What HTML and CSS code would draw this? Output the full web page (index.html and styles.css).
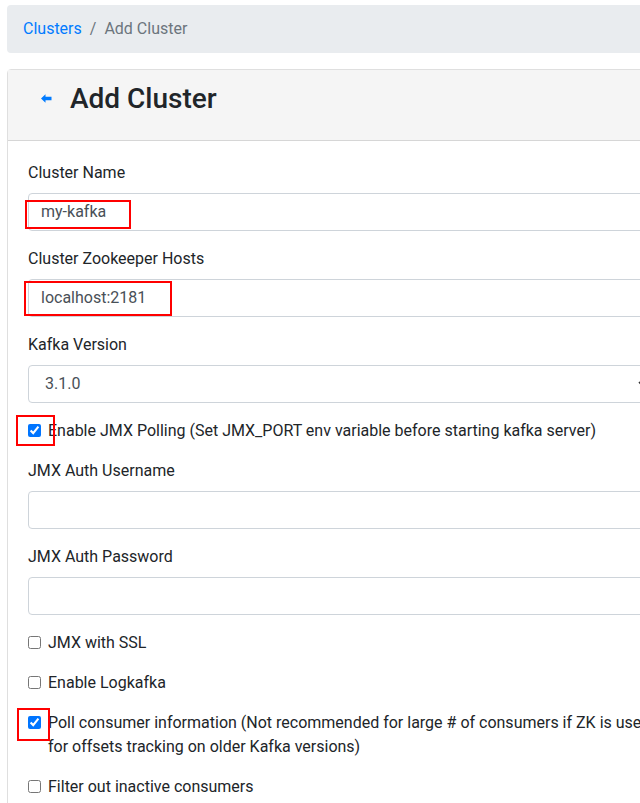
FILE: index.html
```html
<!DOCTYPE html>
<html lang="en">
<head>
<meta charset="utf-8">
<title>Add Cluster</title>
<link rel="stylesheet" href="styles.css">
</head>
<body>
<div class="page">
  <nav class="breadcrumb">
    <a class="crumb-link" href="#">Clusters</a>
    <span class="crumb-sep">/</span>
    <span class="crumb-active">Add Cluster</span>
  </nav>

  <div class="card">
    <div class="card-header">
      <a class="back" href="#">
        <svg width="11" height="9" viewBox="0 0 11 9"><path d="M0 4.5 L4.5 0.3 L4.5 2.8 L10.5 2.8 L10.5 6.2 L4.5 6.2 L4.5 8.7 Z" fill="#007bff"/></svg>
      </a>
      <h3 class="title">Add Cluster</h3>
    </div>
    <div class="card-body">
      <div class="form-group">
        <label class="label">Cluster Name</label>
        <input class="form-control" type="text" value="my-kafka">
      </div>
      <div class="form-group">
        <label class="label">Cluster Zookeeper Hosts</label>
        <input class="form-control" type="text" value="localhost:2181">
      </div>
      <div class="form-group">
        <label class="label">Kafka Version</label>
        <div class="select-wrap">
          <select class="form-control select"><option>3.1.0</option></select>
          <svg class="chevron" width="9" height="6" viewBox="0 0 9 6"><path d="M1 1 L4.5 4.5 L8 1" fill="none" stroke="#333" stroke-width="1.6"/></svg>
        </div>
      </div>
      <div class="form-check">
        <input class="check" type="checkbox" checked>
        <span>Enable JMX Polling (Set JMX_PORT env variable before starting kafka server)</span>
      </div>
      <div class="form-group">
        <label class="label">JMX Auth Username</label>
        <input class="form-control" type="text" value="">
      </div>
      <div class="form-group">
        <label class="label">JMX Auth Password</label>
        <input class="form-control" type="password" value="">
      </div>
      <div class="form-check">
        <input class="check" type="checkbox">
        <span>JMX with SSL</span>
      </div>
      <div class="form-check">
        <input class="check" type="checkbox">
        <span>Enable Logkafka</span>
      </div>
      <div class="form-check">
        <input class="check" type="checkbox" checked>
        <span>Poll consumer information (Not recommended for large # of consumers if ZK is used for offsets tracking on older Kafka versions)</span>
      </div>
      <div class="form-check">
        <input class="check" type="checkbox">
        <span>Filter out inactive consumers</span>
      </div>
    </div>
  </div>

  <div class="mark mark-1"></div>
  <div class="mark mark-2"></div>
  <div class="mark mark-3"></div>
  <div class="mark mark-4"></div>
</div>
</body>
</html>
```

FILE: styles.css
```css
html, body {
  margin: 0;
  padding: 0;
  overflow: hidden;
  background: #fff;
}
body {
  font-family: Roboto, "Noto Sans", sans-serif;
  font-size: 16px;
  line-height: 24px;
  color: #212529;
}
.page {
  position: relative;
  width: 640px;
  height: 803px;
  overflow: hidden;
  padding: 5px 0 0 7px;
  box-sizing: border-box;
}
.breadcrumb {
  width: 674px;
  box-sizing: border-box;
  background: #e9ecef;
  border-radius: 4px;
  padding: 12px 16px;
  margin-bottom: 16px;
  display: flex;
}
.crumb-link {
  color: #007bff;
  text-decoration: none;
}
.crumb-sep {
  color: #6c757d;
  padding: 0 8px;
}
.crumb-active {
  color: #6c757d;
}
.card {
  width: 674px;
  box-sizing: border-box;
  border: 1px solid rgba(0,0,0,.125);
  border-radius: 4px;
}
.card-header {
  background: #f5f5f5;
  border-bottom: 1px solid rgba(0,0,0,.125);
  padding: 12px 20px 16px 33px;
  display: flex;
  align-items: flex-start;
}
.back {
  display: flex;
  margin-top: 12px;
  margin-right: 18px;
}
.title {
  margin: 0 0 8px;
  font-size: 28px;
  font-weight: 500;
  line-height: 33.6px;
  color: #212529;
}
.card-body {
  padding: 20px;
}
.form-group {
  margin-bottom: 16px;
}
.label {
  display: block;
  margin-bottom: 8px;
}
.form-control {
  display: block;
  width: 100%;
  height: 38px;
  box-sizing: border-box;
  padding: 6px 12px;
  font-family: inherit;
  font-size: 16px;
  line-height: 24px;
  color: #495057;
  background: #fff;
  border: 1px solid #ced4da;
  border-radius: 4px;
  margin: 0;
}
.select-wrap {
  position: relative;
}
.select {
  appearance: none;
  -webkit-appearance: none;
  padding-left: 16px;
}
.chevron {
  position: absolute;
  right: 13px;
  top: 16px;
}
.form-check {
  position: relative;
  padding-left: 20px;
  margin-bottom: 16px;
}
.check {
  position: absolute;
  left: 0;
  top: 0;
  margin: 5px 0 0 0;
  width: 13px;
  height: 13px;
}
.mark {
  position: absolute;
  border: 2px solid #f00;
  box-sizing: border-box;
}
.mark-1 { left: 25px; top: 200px; width: 106px; height: 29px; }
.mark-2 { left: 24px; top: 281px; width: 148px; height: 35px; }
.mark-3 { left: 16px; top: 415px; width: 39px; height: 31px; }
.mark-4 { left: 17px; top: 708px; width: 33px; height: 33px; }
```
